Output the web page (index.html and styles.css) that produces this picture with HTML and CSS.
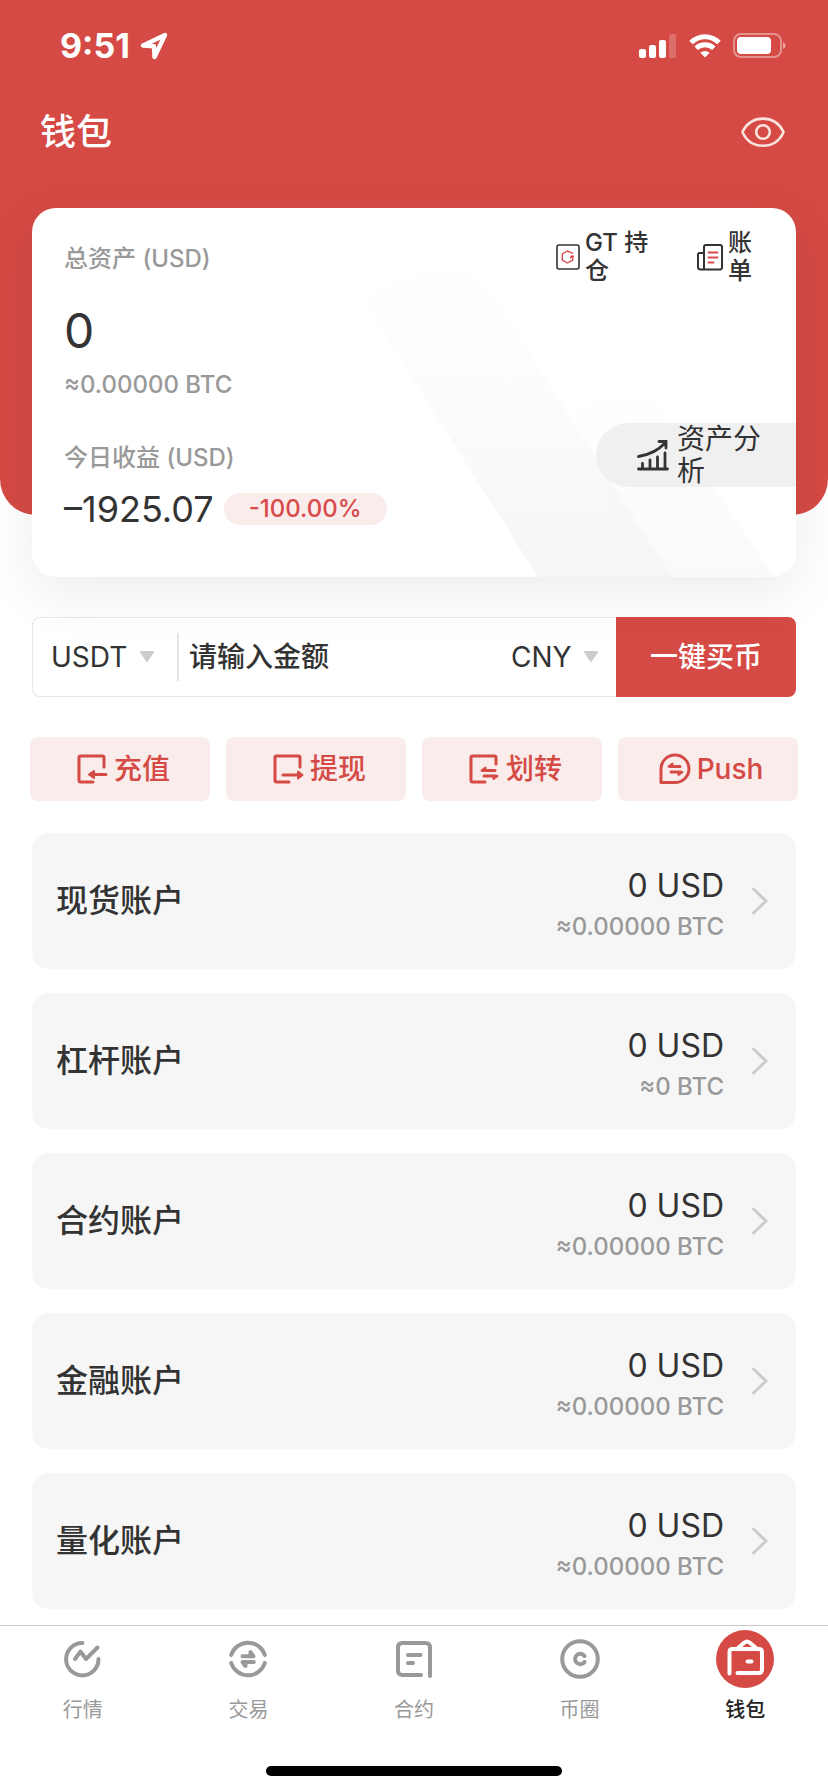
FILE: index.html
```html
<!DOCTYPE html>
<html lang="zh-CN">
<head>
<meta charset="utf-8">
<meta name="viewport" content="width=device-width, initial-scale=1">
<title>钱包</title>
<link rel="stylesheet" href="styles.css">
</head>
<body>
<div class="app">
  <header class="hero">
    <div class="status">
      <div class="status-time">
        <span>9:51</span>
        <svg width="28" height="28" viewBox="0 0 28 28" fill="none" stroke="#fff" stroke-width="4.400" stroke-linejoin="round"><path d="M3 13.500 25 3 14.500 25 14 14.200Z"/></svg>
      </div>
      <div class="status-icons">
        <svg width="38" height="24" viewBox="0 0 38 24" fill="#fff"><rect x="0" y="15" width="7" height="9" rx="2"/><rect x="10" y="11" width="7" height="13" rx="2"/><rect x="20" y="6" width="7" height="18" rx="2"/><rect x="30" y="0" width="7" height="24" rx="2" opacity=".2"/></svg>
        <svg width="32" height="24" viewBox="0 0 32 24"><g fill="none" stroke="#fff" stroke-width="5"><path d="M2 8.500C10 .7 22 .7 30 8.500"/><path d="M7.200 14.200C12 9.600 20 9.600 24.800 14.200"/></g><path d="M16 23.500 11.300 18.800Q16 15 20.700 18.800Z" fill="#fff"/></svg>
        <svg width="53" height="26" viewBox="0 0 53 26"><rect x="1" y="1" width="47" height="23" rx="7" fill="none" stroke="#fff" stroke-opacity=".4" stroke-width="2"/><rect x="4" y="4" width="34" height="17" rx="4" fill="#fff"/><path d="M50 9Q52.500 10 52.500 12.500T50 16Z" fill="#fff" opacity=".5"/></svg>
      </div>
    </div>
    <div class="titlebar">
      <h1>钱包</h1>
      <button class="eye" aria-label="显示或隐藏资产">
        <svg width="44" height="32" viewBox="0 0 44 32" fill="none" stroke="#fbe3dd" stroke-width="2.600"><path d="M1.800 17C6 25.500 13 29.800 22 29.800S38 25.500 42.200 17Q42.600 16.200 42.200 15.400C38 7 31 2.600 22 2.600S6 7 1.800 15.400Q1.400 16.200 1.800 17Z" stroke-linejoin="round"/><circle cx="22" cy="16" r="6.800"/></svg>
      </button>
    </div>
  </header>

  <main>
    <section class="card">
      <svg class="card-art" viewBox="0 0 764 369" aria-hidden="true">
        <defs><linearGradient id="fade" x1="0" y1="0" x2="0" y2="1"><stop offset="0" stop-color="#f6f6f6" stop-opacity="0"/><stop offset=".4" stop-color="#f6f6f6" stop-opacity=".3"/><stop offset="1" stop-color="#f6f6f6"/></linearGradient>
        <linearGradient id="fade2" x1="0" y1="0" x2="0" y2="1"><stop offset="0" stop-color="#fafafa" stop-opacity="0"/><stop offset="1" stop-color="#fafafa"/></linearGradient></defs>
        <path d="M540 200 612 170 742 369H600Z" fill="url(#fade2)"/>
        <path d="M330 90 430 40 640 369H506Z" fill="url(#fade)"/>
      </svg>
      <div class="card-main">
        <p class="muted total-label">总资产 (USD)</p>
        <p class="total">0</p>
        <p class="muted total-btc">≈0.00000 BTC</p>
        <p class="muted">今日收益 (USD)</p>
        <p class="profit"><span>–1925.07</span><span class="badge">-100.00%</span></p>
      </div>
      <div class="card-side">
        <div class="links">
          <button class="link link-gt">
            <svg width="24" height="26" viewBox="0 0 24 26" fill="none"><rect x="1" y="1" width="22" height="24" rx="2" stroke="#333" stroke-width="1.600"/><path d="M17 9.300 11.500 7 6.300 10V16L11.500 19 16.700 16V12.500L14 14M14.300 12.300H18" stroke="#dc4d52" stroke-width="1.400"/></svg>
            <span>GT 持仓</span>
          </button>
          <button class="link link-bill">
            <svg width="26" height="27" viewBox="0 0 26 27" fill="none" stroke-linecap="round"><path d="M7 25.500V3Q7 1 9 1H23Q25 1 25 3V23.500Q25 25.500 23 25.500H3.500Q1 25.500 1 23V10.500Q1 9 2.500 9H7" stroke="#333" stroke-width="2"/><path d="M11.500 8.500H20.500M11.500 13.500H20.500M11.500 18.500H16.500" stroke="#dc4d52" stroke-width="2"/></svg>
            <span>账单</span>
          </button>
        </div>
        <button class="analysis">
          <svg width="32" height="32" viewBox="0 0 32 32" fill="none" stroke="#333" stroke-width="2.800" stroke-linecap="round"><path d="M1.500 30H30.500M5.500 29V24.500M13 29V21M20.500 29V18M28 29V14M1.500 17.500Q18 15 28.500 3.500M22 2.500H29V9"/></svg>
          <span>资产分析</span>
        </button>
      </div>
    </section>

    <form class="buy">
      <label class="pick">
        <select aria-label="币种"><option>USDT</option></select>
        <svg width="16" height="12" viewBox="0 0 16 12"><path d="M2 1H14L8 10Z" fill="#ccc" stroke="#ccc" stroke-width="2" stroke-linejoin="round"/></svg>
      </label>
      <input class="amount" type="text" placeholder="请输入金额" aria-label="金额">
      <label class="pick pick-fiat">
        <select aria-label="法币"><option>CNY</option></select>
        <svg width="16" height="12" viewBox="0 0 16 12"><path d="M2 1H14L8 10Z" fill="#ccc" stroke="#ccc" stroke-width="2" stroke-linejoin="round"/></svg>
      </label>
      <button class="buy-btn" type="button">一键买币</button>
    </form>

    <div class="actions">
      <button class="action"><svg width="32" height="30" viewBox="0 0 32 30" fill="none" stroke="#d54a45" stroke-width="3" stroke-linecap="round" stroke-linejoin="round"><path d="M28 13V3.500Q28 2 26.500 2H4.500Q3 2 3 3.500V26.500Q3 28 4.500 28H17M17 20.500H30"/><path d="M13 20.500 18 17V24Z" fill="#d54a45" stroke-width="2"/></svg><span>充值</span></button>
      <button class="action"><svg width="32" height="30" viewBox="0 0 32 30" fill="none" stroke="#d54a45" stroke-width="3" stroke-linecap="round" stroke-linejoin="round"><path d="M28 13V3.500Q28 2 26.500 2H4.500Q3 2 3 3.500V26.500Q3 28 4.500 28H17M11 21H27"/><path d="M30.500 21 26 17.500V24.500Z" fill="#d54a45" stroke-width="2"/></svg><span>提现</span></button>
      <button class="action"><svg width="32" height="30" viewBox="0 0 32 30" fill="none" stroke="#d54a45" stroke-width="3" stroke-linecap="round" stroke-linejoin="round"><path d="M28 10V3.500Q28 2 26.500 2H4.500Q3 2 3 3.500V26.500Q3 28 4.500 28H17M15 16.500H27M16 22H28"/><path d="M13.500 16.500 17.500 13.500V16.500ZM29.500 22 25.500 25V22Z" fill="#d54a45" stroke-width="2"/></svg><span>划转</span></button>
      <button class="action"><svg width="32" height="32" viewBox="0 0 32 32" fill="none" stroke="#d54a45" stroke-width="3" stroke-linecap="round" stroke-linejoin="round"><path d="M2 29.500V16A14 13.700 0 1 1 16 29.500ZM11 13.500H21M12 19H22"/><path d="M9.500 13.500 13.500 10.500V13.500ZM23.500 19 19.500 22V19Z" fill="#d54a45" stroke-width="2"/></svg><span>Push</span></button>
    </div>

    <div class="accounts">
      <a class="account" href="#spot"><span class="name">现货账户</span><span class="values"><span class="usd">0 USD</span><span class="btc">≈0.00000 BTC</span></span><svg width="16" height="28" viewBox="0 0 16 28"><path d="M1.500 2 14 14 1.500 26"/></svg></a>
      <a class="account" href="#margin"><span class="name">杠杆账户</span><span class="values"><span class="usd">0 USD</span><span class="btc">≈0 BTC</span></span><svg width="16" height="28" viewBox="0 0 16 28"><path d="M1.500 2 14 14 1.500 26"/></svg></a>
      <a class="account" href="#contract"><span class="name">合约账户</span><span class="values"><span class="usd">0 USD</span><span class="btc">≈0.00000 BTC</span></span><svg width="16" height="28" viewBox="0 0 16 28"><path d="M1.500 2 14 14 1.500 26"/></svg></a>
      <a class="account" href="#finance"><span class="name">金融账户</span><span class="values"><span class="usd">0 USD</span><span class="btc">≈0.00000 BTC</span></span><svg width="16" height="28" viewBox="0 0 16 28"><path d="M1.500 2 14 14 1.500 26"/></svg></a>
      <a class="account" href="#quant"><span class="name">量化账户</span><span class="values"><span class="usd">0 USD</span><span class="btc">≈0.00000 BTC</span></span><svg width="16" height="28" viewBox="0 0 16 28"><path d="M1.500 2 14 14 1.500 26"/></svg></a>
    </div>
  </main>

  <footer class="bottom">
    <nav class="tabs">
      <a class="tab" href="#market"><svg width="58" height="58" viewBox="0 0 58 58"><path d="M28.500 13A16.200 16.200 0 1 0 44.500 29M21 29 26.500 21.500 32 29 43.500 17.500"/></svg><span>行情</span></a>
      <a class="tab" href="#trade"><svg width="58" height="58" viewBox="0 0 58 58"><path d="M12.200 25A17.600 17.600 0 0 1 45.800 25M12.200 33A17.600 17.600 0 0 0 45.800 33"/><path d="M23.500 26.200H34.500L31.500 22.200V26M34.800 32H23.500L26.500 36V32"/></svg><span>交易</span></a>
      <a class="tab" href="#contracts"><svg width="58" height="58" viewBox="0 0 58 58"><path d="M45 46V17.500Q45 13 40.500 13H17.500Q13 13 13 17.500V40.500Q13 45 17.500 45H36M23 25H35.500M23 33H28"/></svg><span>合约</span></a>
      <a class="tab" href="#circle"><svg width="58" height="58" viewBox="0 0 58 58"><circle cx="29" cy="29" r="17.800"/><path d="M33.500 26A5.200 5.200 0 1 0 33.500 32"/></svg><span>币圈</span></a>
      <a class="tab active" href="#wallet"><svg width="58" height="58" viewBox="0 0 58 58"><circle class="disc" cx="29" cy="29" r="29"/><path d="M13.500 43.500V22Q13.500 19 16.500 19H43Q46 19 46 22V39.500Q46 43 42.500 43H21.500M22 18 28.500 12.500Q31 10.500 33.500 12.500L40 18M31.500 31.500H35.500"/></svg><span>钱包</span></a>
    </nav>
    <div class="home-bar"></div>
  </footer>
</div>
</body>
</html>
```
FILE: styles.css
```css
*, *::before, *::after { box-sizing: border-box; }

body {
  margin: 0;
  background: #fff;
  color: #333;
  font-family: Inter, "Noto Sans CJK SC", sans-serif;
  font-size: 24px;
  line-height: 32px;
}

p, h1 { margin: 0; }

button, input, select {
  margin: 0;
  padding: 0;
  border: 0;
  background: none;
  color: inherit;
  font: inherit;
}

a { color: inherit; text-decoration: none; }
svg { display: block; flex: none; }

.app {
  display: flex;
  flex-direction: column;
  min-height: 100vh;
}

/* Red header; the asset card overlaps its lower part */
.hero {
  padding-bottom: 342px;
  margin-bottom: -307px;
  border-radius: 0 0 36px 36px;
  background: #d54a45;
  color: #fff;
}

.status {
  display: flex;
  align-items: center;
  justify-content: space-between;
  height: 91px;
  padding: 0 42px 0 60px;
}

.status-time {
  display: flex;
  align-items: center;
  gap: 10px;
  font-size: 34px;
  font-weight: 700;
}

.status-icons { display: flex; align-items: center; gap: 12px; }

.titlebar {
  display: flex;
  align-items: center;
  justify-content: space-between;
  height: 82px;
  padding: 0 43px 0 40px;
}

.titlebar h1 { font-size: 36px; font-weight: 500; line-height: 48px; }

main { position: relative; }

.card {
  position: relative;
  display: flex;
  justify-content: space-between;
  min-height: 369px;
  margin: 0 32px;
  border-radius: 24px;
  background: #fff;
  box-shadow: 0 16px 56px rgba(0, 0, 0, .08);
}

.card-art {
  position: absolute;
  inset: 0;
  width: 100%;
  height: 100%;
  border-radius: 24px;
}

.card-main { position: relative; padding: 35px 0 0 32px; }
.muted { color: #999; font-weight: 500; }
.total-label { margin-bottom: 28px; }
.total { margin-bottom: 10px; font-size: 48px; line-height: 56px; }
.total-btc { margin-bottom: 41px; }

.profit {
  display: flex;
  align-items: center;
  gap: 10px;
  margin-top: 15px;
  font-size: 36px;
  line-height: 40px;
}

.badge {
  padding: 0 25px;
  border-radius: 16px;
  background: #f9eceb;
  color: #d84a4a;
  font-size: 24px;
  font-weight: 500;
  line-height: 32px;
}

.card-side {
  position: relative;
  display: flex;
  flex-direction: column;
  align-items: flex-end;
  justify-content: space-between;
  padding: 21px 0 90px;
}

.links { display: flex; gap: 44px; padding-right: 44px; }

.link {
  display: flex;
  align-items: center;
  gap: 5px;
  font-weight: 500;
  line-height: 28px;
  text-align: left;
}

.link-gt span { width: 68px; }
.link-bill span { width: 24px; }

.analysis {
  display: flex;
  align-items: center;
  gap: 8px;
  height: 64px;
  padding: 0 31px 0 41px;
  border-radius: 32px 0 0 32px;
  background: #f0f0f0;
  font-size: 28px;
  line-height: 32px;
  text-align: left;
}

.analysis span { width: 88px; }

.buy {
  display: flex;
  height: 80px;
  margin: 40px 32px 0;
  border: 1px solid #e8e8e8;
  border-right: 0;
  border-radius: 8px;
  background: #fff;
  font-size: 28px;
}

.pick { display: flex; align-items: center; gap: 11px; padding: 0 22px 0 18px; }
.pick-fiat { padding: 0 17px; }
.pick select { appearance: none; height: 40px; }

.amount {
  flex: 1;
  align-self: center;
  min-width: 0;
  height: 48px;
  padding-left: 10px;
  border-left: 2px solid #e5e5e5;
  font-weight: 500;
}

.amount::placeholder { color: #333; opacity: 1; }

.buy-btn {
  flex: 0 0 180px;
  margin: -1px 0;
  border-radius: 0 8px 8px 0;
  background: #d54a45;
  color: #fff;
  font-weight: 500;
}

.actions {
  display: grid;
  grid-template-columns: repeat(4, 1fr);
  gap: 16px;
  margin: 40px 30px 32px;
}

.action {
  display: flex;
  align-items: center;
  justify-content: center;
  gap: 6px;
  height: 64px;
  padding-left: 6px;
  border-radius: 8px;
  background: #f9eceb;
  color: #d54a45;
  font-size: 28px;
  font-weight: 500;
}

.accounts { display: grid; gap: 24px; margin: 0 32px 16px; }

.account {
  display: flex;
  align-items: center;
  min-height: 136px;
  padding: 0 28px 0 24px;
  border-radius: 16px;
  background: #f6f6f6;
}

.name { flex: 1; font-size: 32px; font-weight: 500; line-height: 40px; }
.values { display: grid; gap: 5px; padding-top: 6px; margin-right: 28px; text-align: right; }
.usd { font-size: 32px; line-height: 40px; }
.btc { color: #999; font-weight: 500; }
.account path { fill: none; stroke: #ccc; stroke-width: 3; stroke-linecap: round; stroke-linejoin: round; }

.bottom {
  margin-top: auto;
  padding: 4px 0 16px;
  border-top: 1px solid #c8c8c8;
  background: #fff;
}

.tabs { display: grid; grid-template-columns: repeat(5, 1fr); }

.tab {
  display: grid;
  justify-items: center;
  gap: 8px;
  color: #999;
  font-size: 20px;
  line-height: 28px;
}

.tab path, .tab circle {
  fill: none;
  stroke: #999;
  stroke-width: 4;
  stroke-linecap: round;
  stroke-linejoin: round;
}

.tab.active { color: #222; font-weight: 500; }
.tab.active path { stroke: #fff; }
.tab .disc { fill: #d54a45; stroke: none; }

.home-bar {
  width: 296px;
  height: 10px;
  margin: 42px auto 0;
  border-radius: 5px;
  background: #000;
}
```
